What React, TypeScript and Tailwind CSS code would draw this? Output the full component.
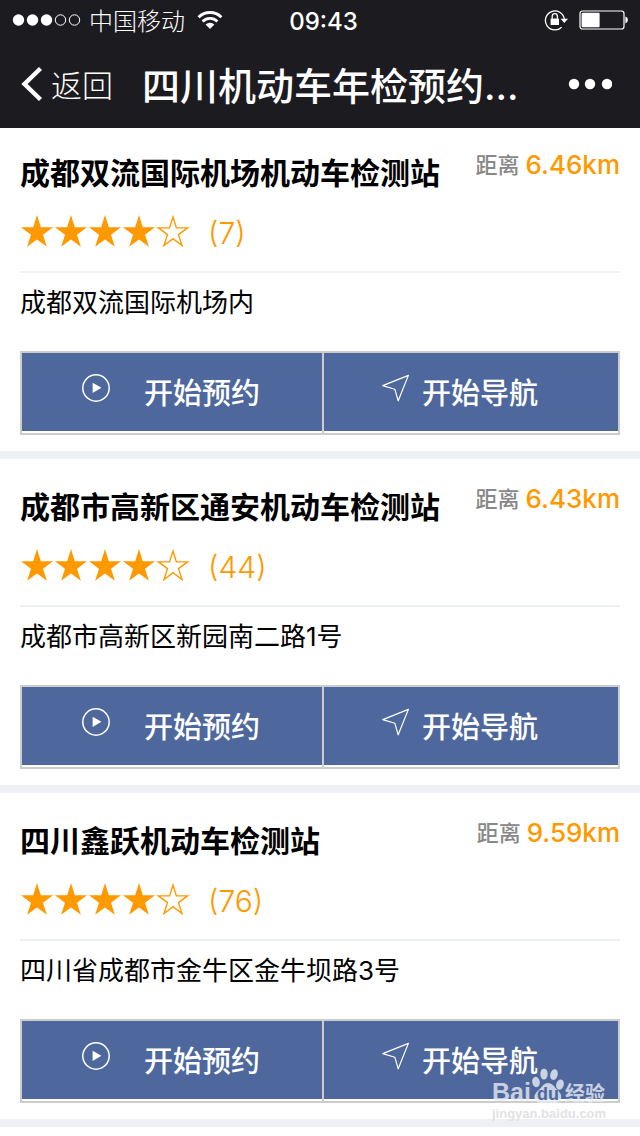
type Station = {
  id: number
  name: string
  distance: string
  rating: number
  reviews: number
  address: string
}

const stations: Station[] = [
  {
    id: 1,
    name: '成都双流国际机场机动车检测站',
    distance: '6.46km',
    rating: 4,
    reviews: 7,
    address: '成都双流国际机场内',
  },
  {
    id: 2,
    name: '成都市高新区通安机动车检测站',
    distance: '6.43km',
    rating: 4,
    reviews: 44,
    address: '成都市高新区新园南二路1号',
  },
  {
    id: 3,
    name: '四川鑫跃机动车检测站',
    distance: '9.59km',
    rating: 4,
    reviews: 76,
    address: '四川省成都市金牛区金牛坝路3号',
  },
]

function Star({ filled }: { filled: boolean }) {
  return (
    <svg viewBox="0 0 34 32" className="h-8 w-[34px]" aria-hidden="true">
      {filled ? (
        <path
          d="M17 0l3.8 12.2H33l-10 7.5 3.9 12.1L17 24.4 7.1 31.8 11 19.7 1 12.2h12.2z"
          fill="#ff9900"
        />
      ) : (
        <path
          d="M17 2l3.4 10.900h11.200l-9.100 6.700 3.500 10.900-9-6.800-9 6.800 3.500-10.900-9.100-6.700h11.200z"
          fill="none"
          stroke="#ff9900"
          strokeWidth="1.4"
        />
      )}
    </svg>
  )
}

function StatusBar() {
  return (
    <div className="flex h-10 items-center pr-[11px] pl-3">
      <div className="flex flex-1 items-center">
        <svg viewBox="0 0 70 12" className="h-3 w-[70px]" aria-hidden="true">
          <g fill="#fff">
            <circle cx="6.5" cy="6" r="5.7" />
            <circle cx="20.5" cy="6" r="5.7" />
            <circle cx="34.5" cy="6" r="5.7" />
          </g>
          <g fill="none" stroke="#fff">
            <circle cx="48.5" cy="6" r="5.2" />
            <circle cx="62.5" cy="6" r="5.2" />
          </g>
        </svg>
        <span className="ml-[7px] pt-[3px] text-[24px] leading-8 font-light">中国移动</span>
        <svg viewBox="0 0 26 20" className="ml-3 h-5 w-[26px]" aria-hidden="true">
          <g fill="none" stroke="#fff" strokeWidth="2.8">
            <path d="M1.6 7.2a16.2 16.2 0 0 1 22.8 0" />
            <path d="M5.6 11.4a10.5 10.5 0 0 1 14.8 0" />
          </g>
          <path d="M8.6 14.6a6.3 6.3 0 0 1 8.8 0L13 19z" fill="#fff" />
        </svg>
      </div>

      <span className="ml-1.5 pt-[3px] text-[24px] leading-8 font-medium">09:43</span>

      <div className="flex flex-1 items-center justify-end">
        <svg viewBox="0 0 24 22" className="h-[22px] w-6" aria-hidden="true">
          <path
            d="M17.6 18.2A9.5 9.5 0 1 1 20.3 10"
            fill="none"
            stroke="#fff"
            strokeWidth="1.3"
          />
          <path d="M16.600 9.8h7.400l-3.700 4.2z" fill="#fff" />
          <rect x="6.600" y="9.4" width="8.4" height="6.6" rx=".6" fill="#fff" />
          <path
            d="M8.200 9.8V7.4a2.600 2.7 0 0 1 5.200 0v2.4"
            fill="none"
            stroke="#fff"
            strokeWidth="1.3"
          />
        </svg>
        <svg viewBox="0 0 50 20" className="ml-[11px] h-5 w-[50px]" aria-hidden="true">
          <rect
            x="1"
            y="1"
            width="44"
            height="18"
            rx="2.5"
            fill="none"
            stroke="#fff"
            strokeWidth="1.2"
          />
          <rect x="2.6" y="2.8" width="18" height="14.4" rx="1" fill="#fff" />
          <path d="M46.400 6.6c3.200.6 3.200 6.200 0 6.800z" fill="#fff" />
        </svg>
      </div>
    </div>
  )
}

function NavBar() {
  return (
    <nav className="flex h-[88px] items-center px-5">
      <button type="button" className="flex items-center gap-2">
        <svg viewBox="0 0 23 36" className="h-9 w-[23px]" aria-hidden="true">
          <path d="M20.5 2.5L4.5 18l16 15.5" fill="none" stroke="#fff" strokeWidth="4.4" />
        </svg>
        <span className="pt-1 text-[31px] leading-10 font-light">返回</span>
      </button>
      <h1 className="ml-[29px] flex-1 pt-1 text-[38px] leading-[48px] font-medium whitespace-nowrap">
        四川机动车年检预约...
      </h1>
      <button type="button" aria-label="更多" className="mr-2">
        <svg viewBox="0 0 44 12" className="h-3 w-11" fill="#fff" aria-hidden="true">
          <circle cx="6" cy="6" r="5.2" />
          <circle cx="22" cy="6" r="5.2" />
          <circle cx="39" cy="6" r="5.2" />
        </svg>
      </button>
    </nav>
  )
}

function StationCard({ station }: { station: Station }) {
  return (
    <li className="border-b-8 border-[#edf1f6] bg-white px-5 pt-[26px] pb-4 first:pt-[23px]">
      <div className="flex items-start justify-between">
        <h2 className="text-[30px] leading-[44px] font-bold">{station.name}</h2>
        <p className="flex items-center gap-1.5 leading-7 whitespace-nowrap">
          <span className="text-[22px] font-medium text-[#888888]">距离</span>
          <span className="text-[26px] font-medium text-[#ff9900]">{station.distance}</span>
        </p>
      </div>

      <div className="mt-4 flex h-[62px] items-start border-b-2 border-[#edf1f6] text-[#ff9900]">
        <div className="flex h-10 items-center" role="img" aria-label={`${station.rating} / 5`}>
          {[1, 2, 3, 4, 5].map((n) => (
            <Star key={n} filled={n <= station.rating} />
          ))}
        </div>
        <span className="ml-[18px] text-[30px] leading-[44px] font-light">({station.reviews})</span>
      </div>

      <p className="mt-2 text-[26px] leading-[44px]">{station.address}</p>

      <div className="mt-[26px] grid grid-cols-[300fr_294fr] gap-[2px] border-2 border-[#cccccc] bg-[#cccccc] text-[29px] font-medium text-white">
        <button
          type="button"
          className="flex h-20 items-center justify-center gap-[34px] border-b-2 border-white bg-[#4e689d] pt-1 pr-[2px]"
        >
          <svg viewBox="0 0 28 28" className="mb-3 size-7" aria-hidden="true">
            <circle cx="14" cy="14" r="13.2" fill="none" stroke="#fff" strokeWidth="1.5" />
            <path d="M10.6 8.8l8.8 5-8.8 5.2z" fill="#fff" />
          </svg>
          开始预约
        </button>
        <button
          type="button"
          className="flex h-20 items-center justify-center gap-3 border-b-2 border-white bg-[#4e689d] pt-1 pr-[22px]"
        >
          <svg viewBox="0 0 28 28" className="mb-3 size-7" aria-hidden="true">
            <path
              d="M26.4 1.4L.8 11.6l12 3.600 3.400 11.600z"
              fill="none"
              stroke="#fff"
              strokeWidth="1.2"
              strokeLinejoin="round"
            />
          </svg>
          开始导航
        </button>
      </div>
    </li>
  )
}

function Watermark() {
  return (
    <div className="pointer-events-none absolute right-8 bottom-3 w-[116px] whitespace-nowrap text-[#e9edf4]/80">
      <div className="flex items-end">
        <span className="font-['Liberation_Sans'] text-[25px] leading-6 font-bold">Bai</span>
        <div className="relative h-9 w-[34px] shrink-0">
          <svg viewBox="0 0 34 36" className="h-9 w-[34px]" fill="currentColor" aria-hidden="true">
            <ellipse cx="5" cy="14" rx="3.8" ry="5.2" transform="rotate(-12 5 14)" />
            <ellipse cx="13" cy="6" rx="3.7" ry="5.6" />
            <ellipse cx="23" cy="6.6" rx="3.7" ry="5.4" transform="rotate(14 23 6.6)" />
            <ellipse cx="29" cy="16.600" rx="3.8" ry="5.2" transform="rotate(14 29 16.6)" />
            <path d="M17 15c4.400 0 6.200 4 9 6.600 3 2.800 5 5.400 4 9-1 3.400-4 4.600-7 4.400-4-.3-8-.3-12 0-3.400.2-6.600-1-7.400-4.400-.8-3.400 1.400-6 4.400-8.800 2.800-2.600 4.600-6.800 9-6.800z" />
          </svg>
          <span className="absolute inset-x-0 bottom-0 text-center font-['Liberation_Sans'] text-[18px] leading-5 font-bold text-[#4e689d]">
            du
          </span>
        </div>
        <span className="text-[20px] leading-5 font-bold">经验</span>
      </div>
      <p className="font-['Liberation_Sans'] text-[13px] leading-5 font-bold text-[#e2e2e2]">
        jingyan.baidu.com
      </p>
    </div>
  )
}

function App() {
  return (
    <div className="relative min-h-screen bg-white font-[Inter,'Noto_Sans_CJK_SC',sans-serif] text-black">
      <header className="bg-[#1c1b20] text-white">
        <StatusBar />
        <NavBar />
      </header>
      <main>
        <ul>
          {stations.map((station) => (
            <StationCard key={station.id} station={station} />
          ))}
        </ul>
      </main>
      <Watermark />
    </div>
  )
}

export default App
